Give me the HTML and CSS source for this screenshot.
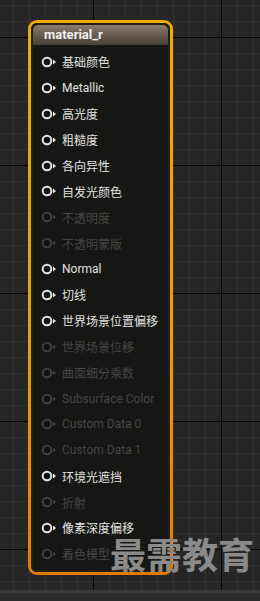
FILE: index.html
```html
<!DOCTYPE html>
<html lang="zh">
  <head>
    <meta charset="UTF-8" />
    <title>material_r</title>
    <link rel="stylesheet" href="styles.css">
  </head>
  <body>
    <div class="canvas">
      <div class="node">
        <div class="node-inner">
          <div class="node-title">material_r</div>
          <ul class="pins">
            <li class="pin"><svg class="pin-icon" viewBox="0 0 16 12"><circle cx="6" cy="6" r="4.3"/><path d="M12 3.5 L15 6 L12 8.5 Z"/></svg>基础颜色</li>
            <li class="pin"><svg class="pin-icon" viewBox="0 0 16 12"><circle cx="6" cy="6" r="4.3"/><path d="M12 3.5 L15 6 L12 8.5 Z"/></svg>Metallic</li>
            <li class="pin"><svg class="pin-icon" viewBox="0 0 16 12"><circle cx="6" cy="6" r="4.3"/><path d="M12 3.5 L15 6 L12 8.5 Z"/></svg>高光度</li>
            <li class="pin"><svg class="pin-icon" viewBox="0 0 16 12"><circle cx="6" cy="6" r="4.3"/><path d="M12 3.5 L15 6 L12 8.5 Z"/></svg>粗糙度</li>
            <li class="pin"><svg class="pin-icon" viewBox="0 0 16 12"><circle cx="6" cy="6" r="4.3"/><path d="M12 3.5 L15 6 L12 8.5 Z"/></svg>各向异性</li>
            <li class="pin"><svg class="pin-icon" viewBox="0 0 16 12"><circle cx="6" cy="6" r="4.3"/><path d="M12 3.5 L15 6 L12 8.5 Z"/></svg>自发光颜色</li>
            <li class="pin off"><svg class="pin-icon" viewBox="0 0 16 12"><circle cx="6" cy="6" r="4.3"/><path d="M12 3.5 L15 6 L12 8.5 Z"/></svg>不透明度</li>
            <li class="pin off"><svg class="pin-icon" viewBox="0 0 16 12"><circle cx="6" cy="6" r="4.3"/><path d="M12 3.5 L15 6 L12 8.5 Z"/></svg>不透明蒙版</li>
            <li class="pin"><svg class="pin-icon" viewBox="0 0 16 12"><circle cx="6" cy="6" r="4.3"/><path d="M12 3.5 L15 6 L12 8.5 Z"/></svg>Normal</li>
            <li class="pin"><svg class="pin-icon" viewBox="0 0 16 12"><circle cx="6" cy="6" r="4.3"/><path d="M12 3.5 L15 6 L12 8.5 Z"/></svg>切线</li>
            <li class="pin"><svg class="pin-icon" viewBox="0 0 16 12"><circle cx="6" cy="6" r="4.3"/><path d="M12 3.5 L15 6 L12 8.5 Z"/></svg>世界场景位置偏移</li>
            <li class="pin off"><svg class="pin-icon" viewBox="0 0 16 12"><circle cx="6" cy="6" r="4.3"/><path d="M12 3.5 L15 6 L12 8.5 Z"/></svg>世界场景位移</li>
            <li class="pin off"><svg class="pin-icon" viewBox="0 0 16 12"><circle cx="6" cy="6" r="4.3"/><path d="M12 3.5 L15 6 L12 8.5 Z"/></svg>曲面细分乘数</li>
            <li class="pin off"><svg class="pin-icon" viewBox="0 0 16 12"><circle cx="6" cy="6" r="4.3"/><path d="M12 3.5 L15 6 L12 8.5 Z"/></svg>Subsurface Color</li>
            <li class="pin off"><svg class="pin-icon" viewBox="0 0 16 12"><circle cx="6" cy="6" r="4.3"/><path d="M12 3.5 L15 6 L12 8.5 Z"/></svg>Custom Data 0</li>
            <li class="pin off"><svg class="pin-icon" viewBox="0 0 16 12"><circle cx="6" cy="6" r="4.3"/><path d="M12 3.5 L15 6 L12 8.5 Z"/></svg>Custom Data 1</li>
            <li class="pin"><svg class="pin-icon" viewBox="0 0 16 12"><circle cx="6" cy="6" r="4.3"/><path d="M12 3.5 L15 6 L12 8.5 Z"/></svg>环境光遮挡</li>
            <li class="pin off"><svg class="pin-icon" viewBox="0 0 16 12"><circle cx="6" cy="6" r="4.3"/><path d="M12 3.5 L15 6 L12 8.5 Z"/></svg>折射</li>
            <li class="pin"><svg class="pin-icon" viewBox="0 0 16 12"><circle cx="6" cy="6" r="4.3"/><path d="M12 3.5 L15 6 L12 8.5 Z"/></svg>像素深度偏移</li>
            <li class="pin off"><svg class="pin-icon" viewBox="0 0 16 12"><circle cx="6" cy="6" r="4.3"/><path d="M12 3.5 L15 6 L12 8.5 Z"/></svg>着色模型</li>
          </ul>
        </div>
      </div>
      <div class="watermark">最需教育</div>
    </div>
    <div class="bottom-bar"></div>
  </body>
</html>
```
FILE: styles.css
```css
* {
  margin: 0;
  padding: 0;
  box-sizing: border-box;
}
body {
  width: 260px;
  height: 601px;
  overflow: hidden;
  background-color: #262626;
  background-image:
    linear-gradient(to right, #050505 1px, transparent 1px),
    linear-gradient(to bottom, #050505 1px, transparent 1px),
    linear-gradient(to right, #323232 1px, transparent 1px),
    linear-gradient(to bottom, #323232 1px, transparent 1px);
  background-size: 128px 100%, 100% 128px, 16px 100%, 100% 16px;
  background-position: 93px 0, 0 37px, 13px 0, 0 5px;
  font-family: Roboto, "Noto Sans CJK SC", sans-serif;
  display: flex;
  flex-direction: column;
}
.canvas {
  position: relative;
  height: 590px;
  padding: 20px 0 0 28px;
}
.node {
  width: 145px;
  height: 555px;
  padding: 3px;
  border-radius: 9px;
  background: linear-gradient(to bottom, #f0aa00, #e9a000 60%, #e57a00);
}
.node-inner {
  height: 100%;
  border-radius: 6px;
  padding: 2px;
  background: #161714;
  box-shadow: inset 0 0 0 2px #221f15;
}
.node-title {
  height: 20px;
  border-radius: 5px 5px 0 0;
  padding-left: 11px;
  background: linear-gradient(to bottom, #8a7c6a, #5a4f44 70%, #4a4239);
  color: #f2f2f2;
  font-weight: 700;
  font-size: 13px;
  line-height: 20px;
}
.pins {
  list-style: none;
  padding-top: 4px;
}
.pin {
  height: 25.9px;
  display: flex;
  align-items: center;
  padding-left: 8px;
  color: #e2e2e2;
  font-size: 12px;
}
.pin-icon {
  width: 16px;
  height: 12px;
  margin-right: 5px;
}
.pin-icon circle {
  fill: #121210;
  stroke: #e6e6e6;
  stroke-width: 2;
}
.pin-icon path {
  fill: #e6e6e6;
}
.pin.off {
  color: #454545;
}
.pin.off .pin-icon circle {
  stroke: #3e3e3e;
}
.pin.off .pin-icon path {
  fill: #3e3e3e;
}
.watermark {
  position: absolute;
  left: 110px;
  top: 528px;
  font-family: "Noto Sans CJK SC", sans-serif;
  font-weight: 700;
  font-size: 36px;
  line-height: 50px;
  letter-spacing: 0;
  color: #8a8a8a;
}
.bottom-bar {
  height: 11px;
  background: #2c2c2c;
  border-top: 3px solid #3a3a3a;
}
```
